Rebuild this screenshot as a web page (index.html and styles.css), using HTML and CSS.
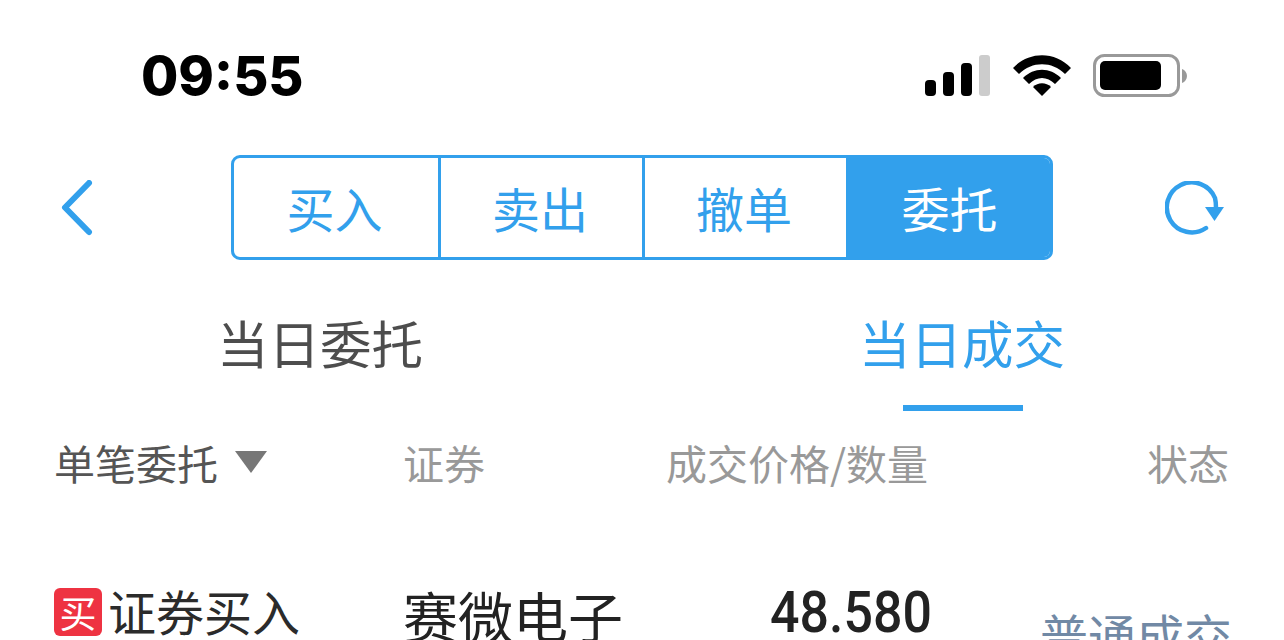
FILE: index.html
```html
<!DOCTYPE html>
<html lang="zh-CN">
<head>
    <meta charset="UTF-8">
    <meta name="viewport" content="width=device-width, initial-scale=1.0">
    <title>当日成交</title>
    <link rel="stylesheet" href="styles.css">
</head>
<body>
    <div class="screen">
        <div class="status-bar">
            <div class="time">09:55</div>
            <div class="status-icons">
                <svg class="icon-signal" width="66" height="42" viewBox="0 0 66 42">
                    <rect x="0" y="25" width="11" height="16" rx="4" fill="#000"/>
                    <rect x="18" y="17" width="11" height="24" rx="4" fill="#000"/>
                    <rect x="36" y="8" width="11" height="33" rx="4" fill="#000"/>
                    <rect x="54" y="0" width="11" height="41" rx="3" fill="#ccc"/>
                </svg>
                <svg class="icon-wifi" width="58" height="42" viewBox="0 0 58 42">
                    <path d="M0 14 C16 -3 42 -3 58 14 L52 20 C39 7 19 7 6 20 Z" fill="#000"/>
                    <path d="M10 24 C21 13 37 13 48 24 L42 30 C34 22 24 22 16 30 Z" fill="#000"/>
                    <path d="M20 33 C25 28 33 28 38 33 L29 42 Z" fill="#000"/>
                </svg>
                <svg class="icon-battery" width="94" height="44" viewBox="0 0 94 44">
                    <rect x="1.5" y="1.5" width="84" height="40" rx="10" fill="none" stroke="#999" stroke-width="3"/>
                    <rect x="7" y="7" width="61" height="29" rx="5" fill="#000"/>
                    <path d="M89 15 C92 16 94 19 94 22 C94 25 92 28 89 29 Z" fill="#999"/>
                </svg>
            </div>
        </div>

        <div class="nav-bar">
            <svg class="icon-back" width="32" height="56" viewBox="0 0 32 56">
                <path d="M28 3 L4 27.500 L28 52" fill="none" stroke="#32a0ec" stroke-width="6" stroke-linecap="round" stroke-linejoin="round"/>
            </svg>
            <div class="segments">
                <div class="segment segment-first">买入</div>
                <div class="segment">卖出</div>
                <div class="segment">撤单</div>
                <div class="segment segment-active">委托</div>
            </div>
            <svg class="icon-refresh" width="60" height="54" viewBox="0 0 60 54">
                <path d="M41 47 A25 25 0 1 1 50 17 Q51 21 51 27" fill="none" stroke="#32a0ec" stroke-width="4.500" stroke-linecap="round"/>
                <path d="M40 26 L59 26 L49.500 40 Z" fill="#32a0ec"/>
            </svg>
        </div>

        <div class="tabs">
            <div class="tab">当日委托</div>
            <div class="tab tab-active">当日成交</div>
        </div>

        <div class="table-head">
            <div class="col-type head-dark">单笔委托<span class="caret"></span></div>
            <div class="col-name">证券</div>
            <div class="col-price">成交价格/数量</div>
            <div class="col-state">状态</div>
        </div>

        <div class="table-row">
            <div class="col-type row-type"><span class="badge">买</span><span class="row-type-text">证券买入</span></div>
            <div class="col-name row-name">赛微电子</div>
            <div class="col-price row-price"><span class="price-num">48.580</span></div>
            <div class="col-state row-state">普通成交</div>
        </div>
    </div>
</body>
</html>
```

FILE: styles.css
```css
* {
    margin: 0;
    padding: 0;
    box-sizing: border-box;
}

html, body {
    height: 100%;
    overflow: hidden;
    background: #fff;
}

body {
    font-family: "Noto Sans CJK SC", "Noto Sans", sans-serif;
}

.screen {
    width: 1284px;
    height: 640px;
    overflow: hidden;
}

.status-bar {
    height: 155px;
    display: flex;
    justify-content: space-between;
    align-items: flex-start;
    padding: 47px 97px 0 141px;
}

.time {
    font-family: Inter, sans-serif;
    font-size: 54px;
    font-weight: 800;
    line-height: 58px;
    color: #000;
}

.status-icons {
    display: flex;
    align-items: flex-start;
    padding-top: 7px;
}

.icon-signal {
    margin-top: 1px;
    margin-right: 22px;
}

.icon-wifi {
    margin-right: 22px;
}

.nav-bar {
    height: 105px;
    display: flex;
    align-items: center;
    padding-left: 61px;
}

.icon-back {
    margin-right: 138px;
}

.icon-refresh {
    margin-left: 112px;
}

.segments {
    width: 822px;
    height: 105px;
    display: flex;
    border: 3px solid #32a0ec;
    border-radius: 9px;
    overflow: hidden;
}

.segment {
    flex: 0 0 204px;
    display: flex;
    align-items: center;
    justify-content: center;
    padding: 0 3px 2px 0;
    font-size: 48px;
    color: #32a0ec;
    border-left: 3px solid #32a0ec;
}

.segment-first {
    border-left: none;
}

.segment-active {
    flex: 1;
    padding-right: 0;
    background: #32a0ec;
    color: #fff;
}

.tabs {
    height: 151px;
    display: flex;
}

.tab {
    flex: 1;
    display: flex;
    align-items: center;
    justify-content: center;
    position: relative;
    padding: 12px 2px 0 0;
    font-size: 51.500px;
    color: #4d4d4d;
}

.tab-active {
    color: #32a0ec;
}

.tab-active::after {
    content: "";
    position: absolute;
    left: 261px;
    bottom: 0;
    width: 120px;
    height: 6px;
    background: #32a0ec;
}

.table-head,
.table-row {
    display: grid;
    grid-template-columns: 403px 263px 1fr 300px;
}

.table-head {
    height: 110px;
    font-size: 41px;
    color: #999;
    padding-top: 21px;
    line-height: 60px;
}

.col-type {
    padding-left: 54px;
}

.col-state {
    text-align: right;
    padding-right: 55px;
    white-space: nowrap;
}

.head-dark {
    color: #555;
    display: flex;
    align-items: center;
    height: 60px;
}

.caret {
    width: 0;
    height: 0;
    margin-left: 17px;
    border-left: 16px solid transparent;
    border-right: 16px solid transparent;
    border-top: 22px solid #777;
}

.table-row {
    height: 120px;
    padding-top: 65px;
    color: #222;
}

.row-type {
    display: flex;
    align-items: flex-start;
    white-space: nowrap;
}

.row-type-text {
    font-size: 48px;
    line-height: 48px;
    color: #2b2b2b;
}

.badge {
    width: 48px;
    height: 48px;
    margin-top: 2px;
    margin-right: 6px;
    display: flex;
    align-items: center;
    justify-content: center;
    border-radius: 6px;
    background: #ee3342;
    color: #fff;
    font-size: 37px;
    line-height: 48px;
}

.row-name {
    margin-top: -2px;
    font-size: 55px;
    line-height: 60px;
    white-space: nowrap;
}

.row-price {
    padding-left: 104px;
}

/* no condensed face installed, so narrow the digits by hand */
.price-num {
    display: inline-block;
    font-family: Roboto, sans-serif;
    font-size: 58px;
    font-weight: 500;
    line-height: 52px;
    transform: scaleX(0.895);
    transform-origin: left center;
}

.row-state {
    font-size: 48px;
    line-height: 56px;
    color: #7189a5;
    padding-top: 20px;
    padding-right: 52px;
}
```
